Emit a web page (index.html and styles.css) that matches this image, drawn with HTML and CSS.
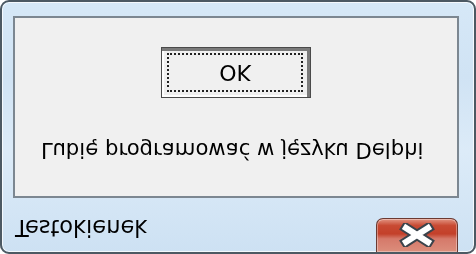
FILE: index.html
```html
<!DOCTYPE html>
<html lang="pl">
<head>
    <meta charset="UTF-8">
    <title>Testokienek</title>
    <link rel="stylesheet" href="styles.css">
</head>
<body>
    <!-- the window is shown upside down, as in the reference -->
    <div class="window">
        <div class="titlebar">
            <span class="title">Testokienek</span>
            <button class="close-btn" aria-label="Zamknij">
                <svg width="36" height="24" viewBox="0 0 36 24">
                    <path d="M7 5 L29 19 M29 5 L7 19" stroke="#3a434b" stroke-width="10" stroke-linecap="square" fill="none"/>
                    <path d="M7 5 L29 19 M29 5 L7 19" stroke="#ffffff" stroke-width="6" stroke-linecap="square" fill="none"/>
                </svg>
            </button>
        </div>
        <div class="client">
            <p class="message">Lubię programować w języku Delphi</p>
            <button class="ok-btn"><span class="focus">OK</span></button>
        </div>
    </div>
</body>
</html>
```

FILE: styles.css
```css
html, body {
    margin: 0;
    padding: 0;
}
body {
    width: 476px;
    height: 254px;
    overflow: hidden;
    background-color: #ffffff;
    font-family: "DejaVu Sans", sans-serif;
}
.window {
    box-sizing: border-box;
    width: 476px;
    height: 254px;
    display: flex;
    flex-direction: column;
    padding: 0 15px 14px 11px;
    border: 2px solid #4c5963;
    border-radius: 9px;
    background: linear-gradient(#cde1f3, #dcebf8 40%, #d0e3f4 70%, #d6e8f7);
    box-shadow: inset 0 0 0 1px rgba(255, 255, 255, 0.75);
    transform: scaleY(-1);
}
.titlebar {
    height: 54px;
    display: flex;
    align-items: flex-start;
    justify-content: space-between;
}
.title {
    margin: 11px 0 0 2px;
    font-size: 22.5px;
    line-height: 26px;
    color: #000000;
}
.close-btn {
    box-sizing: border-box;
    width: 82px;
    height: 34px;
    margin-right: 1px;
    padding: 0;
    display: flex;
    align-items: center;
    justify-content: center;
    border: 1px solid #6b3a32;
    border-top: none;
    border-radius: 0 0 7px 7px;
    background: linear-gradient(#dc8e7c, #d5796a 40%, #c3402a 55%, #c84a33 80%, #e29482);
    box-shadow: inset 0 0 0 1px rgba(255, 255, 255, 0.35);
}
.client {
    flex: 1;
    display: flex;
    flex-direction: column;
    border: 2px solid #7c8791;
    background-color: #f0f0f0;
}
.message {
    margin: 34px 0 0 26px;
    font-size: 21.2px;
    line-height: 24px;
    color: #000000;
}
.ok-btn {
    box-sizing: border-box;
    align-self: center;
    width: 150px;
    height: 51px;
    margin-top: 40px;
    padding: 5px 7px 5px 5px;
    border: 1px solid #4a4a4a;
    background-color: #f0f0f0;
    box-shadow: inset -3px -3px 0 #7a7a7a, inset 2px 2px 0 #ffffff;
    font-family: "DejaVu Sans", sans-serif;
}
.focus {
    display: block;
    height: 39px;
    box-sizing: border-box;
    border: 2px dotted #222222;
    font-size: 22px;
    line-height: 35px;
    color: #000000;
}
```
